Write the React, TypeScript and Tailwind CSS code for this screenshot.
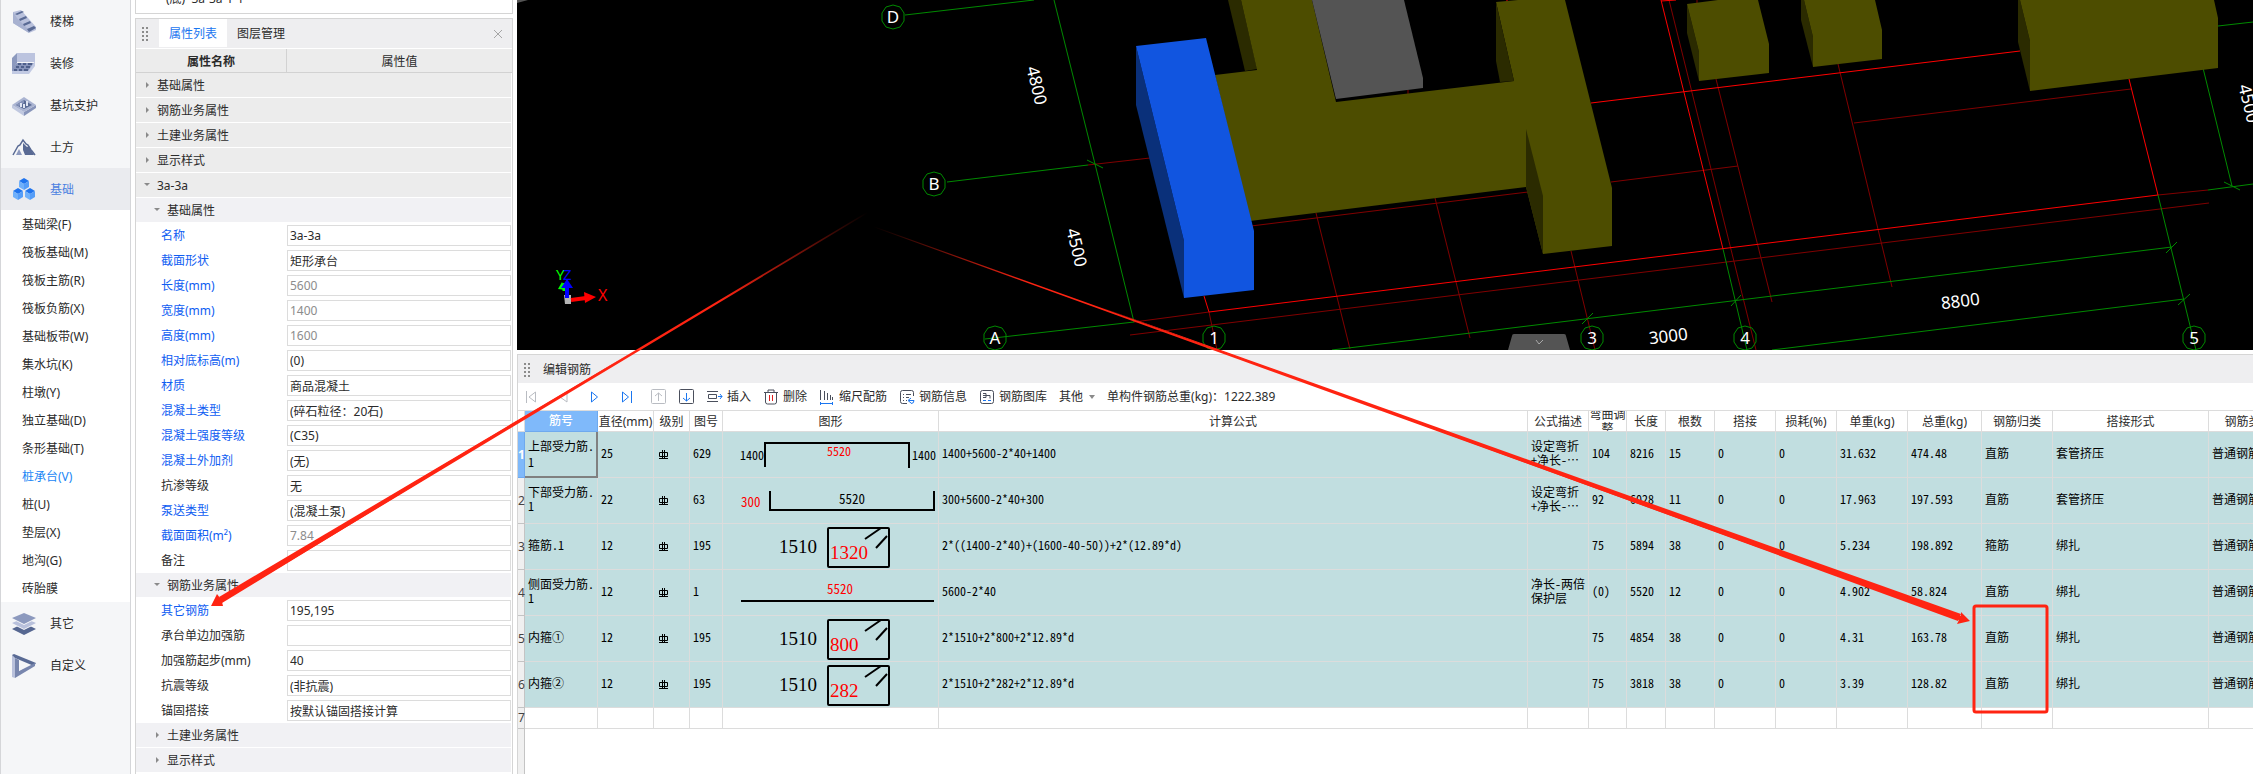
import React, { useState } from "react";
import { clsx } from "clsx";

const RED = "#ff2412";

/* ---------- left module menu ---------- */

const StairsIcon = () => (
  <svg width="24" height="24" viewBox="0 0 24 24">
    <path d="M1 2 9 0 24 17v3l-7 3L1 13z" fill="#b9c1dc" />
    <path d="M1 2v11l16 10v-3L5 8z" fill="#a7b1d0" />
    <path
      d="M3 4 10 1l2 1-7 3zM7 9l7-3 1 2-7 3zM11 14l7-3 1 2-7 3zM15 19l7-3 2 2-7 4z"
      fill="#596a94"
    />
  </svg>
);

const FinishIcon = () => (
  <svg width="24" height="24" viewBox="0 0 24 24">
    <path d="M5 1h18v9H5z" fill="#bcc4df" />
    <path d="M0 6 5 1v10l-5 7z" fill="#8c99be" />
    <path d="M5 11h18l-6 10H0v-4z" fill="#8794ba" />
    <path d="M0 19h16l7-10v5l-6 8H0z" fill="#c2cae3" />
    <path
      d="M6 12h3M11 12h3M16 12h4M4 15h3M9 15h3M14 15h4M2 18h3M7 18h3M12 18h4"
      stroke="#4f608b"
      strokeWidth="2"
    />
  </svg>
);

const PitIcon = () => (
  <svg width="24" height="24" viewBox="0 0 24 24">
    <path d="M0 11v3l12 8v-4z" fill="#c0c8e0" />
    <path d="M24 11v3l-12 8v-4z" fill="#8794ba" />
    <path d="m12 3 12 8-12 7L0 11z" fill="#a9b3d1" />
    <path d="m12 6 8 5-8 4-8-4z" fill="#596a94" />
    <path d="M12 6 4 11l3 1 5-3z" fill="#8794ba" />
    <path d="M8 9h2v4H8zM11 10h2v4h-2zM14 7h2v5h-2z" fill="#dfe4f2" />
  </svg>
);

const EarthIcon = () => (
  <svg width="24" height="24" viewBox="0 0 24 24">
    <path d="m4 19 3-6 3 6z" fill="#8c99be" />
    <path d="M11 7v7l2 5h9l-5-9-2 1z" fill="#596a94" />
    <path
      d="m1 19 5-9 2-1 3-5 3 4 2 1 3 5 1 1 3 4"
      fill="none"
      stroke="#596a94"
      strokeWidth="1.5"
    />
  </svg>
);

const Cube = ({ x, y }: { x: number; y: number }) => (
  <g transform={`translate(${x} ${y})`}>
    <path d="m6 0 5 3-5 3-5-3z" fill="#1f74ee" />
    <path d="M1 3v6l5 3V6z" fill="#6fb0fb" />
    <path d="M11 3v6l-5 3V6z" fill="#559df8" />
  </g>
);

const FoundationIcon = () => (
  <svg width="24" height="24" viewBox="0 0 24 24">
    <Cube x={6} y={0} />
    <Cube x={0} y={10} />
    <Cube x={12} y={10} />
  </svg>
);

const LayersIcon = () => (
  <svg width="24" height="24" viewBox="0 0 24 24">
    <path d="m12 11 12 6-12 6-12-6z" fill="#566791" />
    <path d="m12 6 12 6-12 6-12-6z" fill="#f5f6f8" />
    <path d="m12 6 12 5-12 6-12-6z" fill="#b9c1dc" />
    <path d="M0 7h24l-12 6z" fill="#f5f6f8" />
    <path d="m12 1 12 5-12 6L0 6z" fill="#8c99be" />
  </svg>
);

const CustomIcon = () => (
  <svg width="24" height="24" viewBox="0 0 24 24">
    <path d="M0 1v22l3 1V4z" fill="#b9c1dc" />
    <path d="M0 1 2 0l22 9-2 3L3 4z" fill="#596a94" />
    <path d="m3 24 20-12v-3L7 17V6L3 4z" fill="#7886ae" />
    <path d="m7 8 9 3-9 6z" fill="#f5f6f8" />
  </svg>
);

const topModules = [
  { name: "楼梯", icon: <StairsIcon /> },
  { name: "装修", icon: <FinishIcon /> },
  { name: "基坑支护", icon: <PitIcon /> },
  { name: "土方", icon: <EarthIcon /> },
  { name: "基础", icon: <FoundationIcon /> },
];

const bottomModules = [
  { name: "其它", icon: <LayersIcon /> },
  { name: "自定义", icon: <CustomIcon /> },
];

const foundationItems = [
  "基础梁(F)",
  "筏板基础(M)",
  "筏板主筋(R)",
  "筏板负筋(X)",
  "基础板带(W)",
  "集水坑(K)",
  "柱墩(Y)",
  "独立基础(D)",
  "条形基础(T)",
  "桩承台(V)",
  "桩(U)",
  "垫层(X)",
  "地沟(G)",
  "砖胎膜",
];

const ModuleButton = ({ name, icon, active }: any) => (
  <button
    className={clsx(
      "flex h-[42px] w-full items-center gap-[14px] pl-[11px] pt-[2px] text-left",
      active && "bg-[#eaebef] text-[#4a7fe0]"
    )}
  >
    {icon}
    <span>{name}</span>
  </button>
);

const ModuleMenu = () => {
  const [selected, setSelected] = useState("桩承台(V)");

  return (
    <nav className="w-[131px] shrink-0 border-x border-[#d5d6d9] bg-[#f5f6f8]">
      {topModules.map((m) => (
        <ModuleButton key={m.name} {...m} active={m.name === "基础"} />
      ))}
      <div className="bg-white">
        {foundationItems.map((item) => (
          <button
            key={item}
            onClick={() => setSelected(item)}
            className={clsx(
              "block h-7 w-full pl-[21px] pt-[2px] text-left",
              item === selected && "text-[#1a86f5]"
            )}
          >
            {item}
          </button>
        ))}
      </div>
      {bottomModules.map((m) => (
        <ModuleButton key={m.name} {...m} />
      ))}
    </nav>
  );
};

/* ---------- property panel ---------- */

type Prop = { label: string; value: string; blue?: boolean; dim?: boolean };

const basicProps: Prop[] = [
  { label: "名称", value: "3a-3a", blue: true },
  { label: "截面形状", value: "矩形承台", blue: true },
  { label: "长度(mm)", value: "5600", blue: true, dim: true },
  { label: "宽度(mm)", value: "1400", blue: true, dim: true },
  { label: "高度(mm)", value: "1600", blue: true, dim: true },
  { label: "相对底标高(m)", value: "(0)", blue: true },
  { label: "材质", value: "商品混凝土", blue: true },
  { label: "混凝土类型", value: "(碎石粒径：20石)", blue: true },
  { label: "混凝土强度等级", value: "(C35)", blue: true },
  { label: "混凝土外加剂", value: "(无)", blue: true },
  { label: "抗渗等级", value: "无" },
  { label: "泵送类型", value: "(混凝土泵)", blue: true },
  { label: "截面面积(m²)", value: "7.84", blue: true, dim: true },
  { label: "备注", value: "" },
];

const rebarProps: Prop[] = [
  { label: "其它钢筋", value: "195,195", blue: true },
  { label: "承台单边加强筋", value: "" },
  { label: "加强筋起步(mm)", value: "40" },
  { label: "抗震等级", value: "(非抗震)" },
  { label: "锚固搭接", value: "按默认锚固搭接计算" },
];

const Grip = () => (
  <svg width="7" height="14" viewBox="0 0 7 14" fill="#8b8b8b">
    {[0, 4, 8, 12].map((y) => (
      <g key={y}>
        <rect x="0" y={y} width="2" height="2" />
        <rect x="4" y={y} width="2" height="2" />
      </g>
    ))}
  </svg>
);

const GroupRow = ({ name, open, nested }: any) => (
  <button
    className={clsx(
      "flex h-[25px] w-full items-center gap-[5px] border-b border-white pt-[2px] text-left",
      nested ? "bg-[#f1f1f4] pl-[18px]" : "bg-[#ececec] pl-2"
    )}
  >
    <svg width="8" height="8" viewBox="0 0 8 8" fill="#8a8a8a">
      {open ? <path d="M0 1h6L3 4z" /> : <path d="M2 0v6l3-3z" />}
    </svg>
    <span>{name}</span>
  </button>
);

const PropRow = ({ label, value, blue, dim }: Prop) => (
  <div className="flex h-[25px] items-center">
    <label
      htmlFor={label}
      className={clsx("w-[151px] shrink-0 pl-[25px]", blue && "text-[#0f5df2]")}
    >
      {label}
    </label>
    <input
      id={label}
      defaultValue={value}
      className={clsx(
        "h-[21px] min-w-0 flex-1 border border-[#dcdcdc] px-[2px]",
        dim && "text-[#8c8c8c]"
      )}
    />
  </div>
);

const PropertyPanel = () => (
  <aside className="flex w-[378px] shrink-0 flex-col gap-1">
    <div className="flex h-[14px] items-end overflow-hidden border-x border-b border-[#d5d5d5] pl-[30px]">
      <span className="mb-[6px] whitespace-pre leading-4">(底)  3a-3a-1-1</span>
    </div>
    <section className="flex-1 border-x border-t border-[#d5d5d5]">
      <header className="flex h-[30px] items-center border-b border-white bg-[#eeeef0] pl-[6px] pr-[9px]">
        <Grip />
        <div className="ml-[10px] flex h-full flex-1">
          <button className="h-7 bg-white px-[10px] pt-px text-[#1a76f0]">
            属性列表
          </button>
          <button className="h-7 px-[10px] pt-px">图层管理</button>
        </div>
        <button aria-label="关闭">
          <svg width="10" height="10" viewBox="0 0 10 10" stroke="#a5a5a5">
            <path d="m1 1 8 8M9 1 1 9" />
          </svg>
        </button>
      </header>
      <div className="flex h-6 border-b border-[#d2d2d2] bg-[#ececec] text-center">
        <div className="w-[151px] border-r border-[#d2d2d2] pt-[5px] font-bold">
          属性名称
        </div>
        <div className="flex-1 pt-[5px]">属性值</div>
      </div>
      <div className="pr-px">
        <GroupRow name="基础属性" />
        <GroupRow name="钢筋业务属性" />
        <GroupRow name="土建业务属性" />
        <GroupRow name="显示样式" />
        <GroupRow name="3a-3a" open />
        <GroupRow name="基础属性" open nested />
        {basicProps.map((p) => (
          <PropRow key={p.label} {...p} />
        ))}
        <GroupRow name="钢筋业务属性" open nested />
        {rebarProps.map((p) => (
          <PropRow key={p.label} {...p} />
        ))}
        <GroupRow name="土建业务属性" nested />
        <GroupRow name="显示样式" nested />
      </div>
    </section>
  </aside>
);

/* ---------- 3D view ---------- */

const AxisMark = ({ x, y, text }: { x: number; y: number; text: string }) => (
  <g>
    <polygon
      transform={`translate(${x} ${y})`}
      points="0,-12 7,-10 11,-4 11,4 7,10 0,12 -7,10 -11,4 -11,-4 -7,-10"
      fill="none"
      stroke="#008a00"
    />
    <text x={x} y={y + 6} fontSize="17" fill="#fff" textAnchor="middle">
      {text}
    </text>
  </g>
);

const ModelView = () => (
  <div className="relative h-[350px] bg-black">
    <svg
      className="block h-full w-full"
      viewBox="517 0 1736 350"
      preserveAspectRatio="xMinYMin slice"
    >
      <path d="M517 0h11l-11 3z" fill="#545454" />
      <path
        d="M1134 322 1209 312M1130 335 2209 203M1209 312 1217 350M1088 165 1150 158M1251 226 1528 192M1316 213 1350 349M1435 198 1470 338M1571 251 1595 350M1611 182 1738 166M1669 0 1756 350M1697 0v4M1716 79 1772 302M1838 64 1892 287M1854 123 2131 89M2158 195 2208 190M1408 90v4"
        fill="none"
        stroke="#800000"
      />
      <path
        d="M1204 296 1209 312 2158 195 2129 79M1591 103 2020 51M1661 0 1723 249M1661 1 1676 0M1507 0v3"
        fill="none"
        stroke="#f00"
      />
      <path
        d="M905 15 1034 0M1054 0 1095 164 1134 322M947 182 1088 165M985 339 1134 322M1087 160 1103 168M1332 350 2172 247M1582 324 1593 313M1723 249 1747 350M2158 195 2196 350M1772 350 2184 299M2166 253 2177 242M2178 305 2190 294M1731 306 1741 295M2203 68 2232 186M2224 182 2240 190M2218 26 2253 22M2208 190 2253 184"
        fill="none"
        stroke="#008a00"
      />

      {/* caps and beams */}
      <g fill="#2b2b00">
        <path d="M1228 0h13l16 69-12 2z" />
        <path d="M1687 4v29l12 48V52z" />
        <path d="M1801 0h3l9 37v30l-12-47z" />
        <path d="M2018 0h2l10 41v50l-12-49z" />
      </g>
      <g fill="#4d4d00">
        <path d="M1241 0h71l24 102 178-21-18-79 22-2h47l47 188v58l-69 8-17-67-276 34-35-146 42-5z" />
        <path d="m1687 4 31-4h40l11 44v29l-70 8V52z" />
        <path d="M1804 0h71l7 30v29l-69 8V37z" />
        <path d="M2020 0h194l4 18v50l-188 23V41z" />
      </g>
      <path d="M1496 2v59l4 21 14-1z" fill="#2b2b00" />
      <path d="M1526 129v58l17 67v-58z" fill="#2b2b00" />
      <path d="M1312 0h92l19 78v10l-87 11z" fill="#545454" />
      <path d="M1136 46v59l48 193v-57z" fill="#0a307a" />
      <path d="m1136 46 70-8 48 193v59l-70 8v-57z" fill="#1155e0" />

      <AxisMark x={893} y={17} text="D" />
      <AxisMark x={934} y={184} text="B" />
      <AxisMark x={995} y={338} text="A" />
      <AxisMark x={1214} y={338} text="1" />
      <AxisMark x={1592} y={338} text="3" />
      <AxisMark x={1745} y={338} text="4" />
      <AxisMark x={2194} y={338} text="5" />
      <g fill="#fff" fontSize="17" textAnchor="middle">
        <text transform="translate(1031 87) rotate(76)">4800</text>
        <text transform="translate(1071 249) rotate(76)">4500</text>
        <text transform="translate(2243 105) rotate(76)">4500</text>
        <text transform="translate(2213 -17) rotate(76)">4800</text>
        <text transform="translate(1669 342) rotate(-7)">3000</text>
        <text transform="translate(1961 307) rotate(-7)">8800</text>
      </g>

      {/* coordinate axes */}
      <path d="M564 291v-8" stroke="#0f0" strokeWidth="3" />
      <path d="m558 289 4-7 4 8z" fill="#0f0" />
      <path d="M564 295h7v9h-6z" fill="#b5b5b5" />
      <path d="M567 298v-12" stroke="#00f" strokeWidth="4" />
      <path d="m561 288 6-9 6 9z" fill="#00f" />
      <path d="m571 300 15-2" stroke="#f00" strokeWidth="4" />
      <path d="m584 292 12 5-11 6z" fill="#f00" />
      <text x="556" y="280" fontSize="15" fill="#0f0">Y</text>
      <text x="563" y="280" fontSize="15" fill="#00f">Z</text>
      <text x="598" y="301" fontSize="16" fill="#f00">X</text>
    </svg>
    <button
      aria-label="收起"
      className="absolute bottom-0 left-[991px] h-4 w-[62px]"
    >
      <svg width="62" height="16" viewBox="0 0 62 16">
        <path d="M0 16 4 2q0-2 2-2h50q2 0 2 2l4 14z" fill="#545454" />
        <path d="m28 6 3 4 4-4" fill="none" stroke="#a8a8a8" />
      </svg>
    </button>
  </div>
);

/* ---------- rebar editor ---------- */

const Stirrup = ({ height }: { height: string }) => (
  <svg width="215" height="45" className="block">
    <g fill="none" stroke="#000" strokeWidth="2">
      <rect x="105" y="4" width="61" height="39" rx="1" />
      <path d="m142 15 16-11M153 24l11-12" />
    </g>
    <g className="font-['Liberation_Serif',serif]" fontSize="19">
      <text x="56" y="29">1510</text>
      <text x="107" y="35" fill="#f00">{height}</text>
    </g>
  </svg>
);

const TopBar = () => (
  <svg width="215" height="45" className="block" fontSize="12">
    <path d="M42 35V11h144v25" fill="none" stroke="#000" strokeWidth="2" />
    <text x="17" y="28">1400</text>
    <text x="104" y="24" fill="#f00">5520</text>
    <text x="189" y="28">1400</text>
  </svg>
);

const BottomBar = () => (
  <svg width="215" height="45" className="block" fontSize="13">
    <path d="M47 13v19h164V13" fill="none" stroke="#000" strokeWidth="2" />
    <text x="18" y="29" fill="#f00">300</text>
    <text x="116" y="26">5520</text>
  </svg>
);

const SideBar = () => (
  <svg width="215" height="45" className="block" fontSize="13">
    <path d="M18 31h193" stroke="#000" strokeWidth="2" />
    <text x="104" y="24" fill="#f00">5520</text>
  </svg>
);

const GradeMark = () => (
  <svg width="9" height="10" viewBox="0 0 9 10" fill="none" stroke="#000">
    <path d="M.5 2.500h8v4h-8zM3.500 0v9M5.500 0v9M0 8.500h9" />
  </svg>
);

const columns = [
  { name: "直径(mm)", width: "w-[56px]" },
  { name: "级别", width: "w-[36px]" },
  { name: "图号", width: "w-[33px]" },
  { name: "图形", width: "w-[216px]" },
  { name: "计算公式", width: "" },
  { name: "公式描述", width: "w-[61px]" },
  { name: "弯曲调整", width: "w-[38px]" },
  { name: "长度", width: "w-[39px]" },
  { name: "根数", width: "w-[49px]" },
  { name: "搭接", width: "w-[61px]" },
  { name: "损耗(%)", width: "w-[61px]" },
  { name: "单重(kg)", width: "w-[71px]" },
  { name: "总重(kg)", width: "w-[74px]" },
  { name: "钢筋归类", width: "w-[71px]" },
  { name: "搭接形式", width: "w-[156px]" },
  { name: "钢筋类型", width: "w-[80px]" },
];

const rows = [
  ["上部受力筋.\n1", "25", "629", <TopBar />, "1400+5600-2*40+1400", "设定弯折\n+净长-⋯", "104", "8216", "15", "31.632", "474.48", "直筋", "套管挤压"],
  ["下部受力筋.\n1", "22", "63", <BottomBar />, "300+5600-2*40+300", "设定弯折\n+净长-⋯", "92", "6028", "11", "17.963", "197.593", "直筋", "套管挤压"],
  ["箍筋.1", "12", "195", <Stirrup height="1320" />, "2*((1400-2*40)+(1600-40-50))+2*(12.89*d)", "", "75", "5894", "38", "5.234", "198.892", "箍筋", "绑扎"],
  ["侧面受力筋.\n1", "12", "1", <SideBar />, "5600-2*40", "净长-两倍\n保护层", "(0)", "5520", "12", "4.902", "58.824", "直筋", "绑扎"],
  ["内箍①", "12", "195", <Stirrup height="800" />, "2*1510+2*800+2*12.89*d", "", "75", "4854", "38", "4.31", "163.78", "直筋", "绑扎"],
  ["内箍②", "12", "195", <Stirrup height="282" />, "2*1510+2*282+2*12.89*d", "", "75", "3818", "38", "3.39", "128.82", "直筋", "绑扎"],
];

const Cell = ({ children }: { children?: React.ReactNode }) => (
  <td className="overflow-hidden whitespace-pre border-b border-r border-[#dcdcdc] pb-1 pl-[3px] leading-[14px]">
    {children}
  </td>
);

const RebarTable = () => (
  <table className="w-[calc(100%+36px)] table-fixed border-separate border-spacing-0">
    <thead>
      <tr className="h-[21px] text-center">
        <th className="w-[7px] border-b border-r border-[#dcdcdc]" />
        <th className="w-[73px] border border-l-0 border-t-0 border-[#6ea9ee] bg-[#7fb9fa] p-0 font-medium text-white">
          筋号
        </th>
        {columns.map((c) => (
          <th
            key={c.name}
            className={clsx(
              "border-b border-r border-[#dcdcdc] p-0 font-normal",
              c.width
            )}
          >
            <div className="-mx-1 flex h-5 items-center justify-center overflow-hidden px-1 pt-px leading-[14px]">
              {c.name}
            </div>
          </th>
        ))}
      </tr>
    </thead>
    <tbody className="font-['Noto_Sans_CJK_SC',sans-serif] text-black [font-feature-settings:'hwid']">
      {rows.map((r, i) => (
        <tr key={i} className="h-[46px] bg-[#c1dee0]">
          <th
            className={clsx(
              "border-b border-r p-0 font-['Noto_Sans',sans-serif]",
              i === 0
                ? "border-[#6ea9ee] bg-[#7fb9fa] font-bold text-white"
                : "border-[#c4c4c4] bg-[#f0f0f0] font-normal text-[#444]"
            )}
          >
            {i + 1}
          </th>
          <td
            className={clsx(
              "overflow-hidden whitespace-pre pl-[3px]",
              i === 0
                ? "border-b-2 border-r-2 border-[#808080] leading-4"
                : "border-b border-r border-[#dcdcdc] pb-1 leading-[14px]"
            )}
          >
            {r[0]}
          </td>
          <Cell>{r[1]}</Cell>
          <td className="border-b border-r border-[#dcdcdc] pl-[5px]">
            <GradeMark />
          </td>
          <Cell>{r[2]}</Cell>
          <td className="border-b border-r border-[#dcdcdc] p-0">{r[3]}</td>
          <Cell>{r[4]}</Cell>
          <Cell>{r[5]}</Cell>
          <Cell>{r[6]}</Cell>
          <Cell>{r[7]}</Cell>
          <Cell>{r[8]}</Cell>
          <Cell>0</Cell>
          <Cell>0</Cell>
          <Cell>{r[9]}</Cell>
          <Cell>{r[10]}</Cell>
          <Cell>{r[11]}</Cell>
          <Cell>{r[12]}</Cell>
          <Cell>普通钢筋</Cell>
        </tr>
      ))}
      <tr className="h-[21px]">
        <th className="border-b border-r border-[#c4c4c4] bg-[#f0f0f0] p-0 font-['Noto_Sans',sans-serif] font-normal text-[#444]">
          7
        </th>
        <Cell />
        {columns.map((c) => (
          <Cell key={c.name} />
        ))}
      </tr>
    </tbody>
  </table>
);

const ToolIcon = ({ children, ...rest }: any) => (
  <svg
    width="16"
    height="16"
    viewBox="0 0 16 16"
    fill="none"
    stroke="#4a4f5c"
    className="shrink-0"
    {...rest}
  >
    {children}
  </svg>
);

const Toolbar = () => (
  <div className="flex h-7 items-center gap-3 whitespace-nowrap border-b border-[#dcdcdc] pl-[5px] pt-px">
    <div className="flex gap-4">
      <button aria-label="首行">
        <ToolIcon stroke="#b9bcc2">
          <path d="M3.500 2v12M12.500 3v10L6 8z" />
        </ToolIcon>
      </button>
      <button aria-label="上一行">
        <ToolIcon stroke="#b9bcc2">
          <path d="M12 3v10L5 8z" />
        </ToolIcon>
      </button>
      <button aria-label="下一行">
        <ToolIcon stroke="#1a76f0">
          <path d="M4.500 3v10l6-5z" />
        </ToolIcon>
      </button>
      <button aria-label="末行">
        <ToolIcon stroke="#1a76f0">
          <path d="M3.500 3v10l6-5zM12.500 2v12" />
        </ToolIcon>
      </button>
      <button aria-label="上移">
        <ToolIcon stroke="#b9bcc2">
          <rect x=".5" y=".5" width="14" height="14" rx="1" />
          <path d="M7.500 12V4M4 7l3.500-3L11 7" />
        </ToolIcon>
      </button>
    </div>
    <button aria-label="下移">
      <ToolIcon>
        <rect x=".5" y=".5" width="14" height="14" rx="1" />
        <path d="M7.500 4v8M4 9l3.500 3L11 9" stroke="#1a76f0" />
      </ToolIcon>
    </button>
    <button className="flex items-center gap-1">
      <ToolIcon>
        <path d="M0 2.500h11M0 12.500h11M1.500 5.500h8v4h-8z" />
        <path d="M11 7.500h4M13 5l2 2.500L13 10" stroke="#1a76f0" />
      </ToolIcon>
      插入
    </button>
    <button className="flex items-center gap-1">
      <ToolIcon>
        <path d="M1 3.500h14M5 3V1h6v2M2.500 4v9q0 2 2 2h7q2 0 2-2V4" />
        <path d="M6.500 6v6M9.500 6v6" stroke="#e02020" />
      </ToolIcon>
      删除
    </button>
    <button className="flex items-center gap-1">
      <ToolIcon>
        <path d="M1.500 1v10M5.500 2v9M8.500 4v7M11.500 6v5M13.500 8v3" />
        <path d="M1 14.500h13M1.500 13v3M13.500 13v3" stroke="#1a76f0" />
      </ToolIcon>
      缩尺配筋
    </button>
    <button className="flex items-center gap-1">
      <ToolIcon>
        <path d="M8 14.500H3.500q-2 0-2-2v-9q0-2 2-2h9q2 0 2 2V7M4 5.500h1M7 5.500h5M4 8.500h1M7 8.500h3M4 11.500h1M7 11.500h1" />
        <path d="M10 11.500h5q0 3-3 3M12 9l-3 2.500L12 14" stroke="#1a76f0" />
      </ToolIcon>
      钢筋信息
    </button>
    <button className="flex items-center gap-1">
      <ToolIcon>
        <rect x="1.500" y="1.500" width="13" height="13" rx="2" />
        <path d="M4 4.500h3v4H4M4 6.500h3M7 6.500h4v3" />
        <path d="M4 11.500h3M9 11.500h3" stroke="#1a76f0" />
      </ToolIcon>
      钢筋图库
    </button>
    <button className="flex items-center gap-[6px]">
      其他
      <svg width="6" height="4" viewBox="0 0 6 4" fill="#8a8a8a">
        <path d="M0 0h6L3 4z" />
      </svg>
    </button>
    <span>单构件钢筋总重(kg)：1222.389</span>
  </div>
);

const RebarEditor = () => (
  <section className="mt-1 flex flex-1 flex-col overflow-hidden border-l border-t border-[#d5d5d5]">
    <header className="flex h-7 items-center gap-3 bg-[#eeeef0] pl-[6px] pt-px">
      <Grip />
      <h2>编辑钢筋</h2>
    </header>
    <Toolbar />
    <RebarTable />
    <div className="w-[7px] flex-1 border-r border-[#c4c4c4] bg-[#f0f0f0]" />
  </section>
);

/* Red callout drawn over the whole window */
const Annotation = () => (
  <svg className="pointer-events-none absolute inset-0 h-full w-full">
    <defs>
      <linearGradient id="fadeLeft" gradientUnits="userSpaceOnUse" x1="868" y1="213" x2="720" y2="301">
        <stop offset="0" stopColor={RED} stopOpacity="0" />
        <stop offset="1" stopColor={RED} />
      </linearGradient>
      <linearGradient id="fadeRight" gradientUnits="userSpaceOnUse" x1="873" y1="227" x2="1030" y2="284">
        <stop offset="0" stopColor={RED} stopOpacity="0" />
        <stop offset="1" stopColor={RED} />
      </linearGradient>
    </defs>
    <path
      d="M867 212 220 598 217 594 211 606H223L222 602 868 213z"
      fill="url(#fadeLeft)"
    />
    <path
      d="M873 226 1961 616V612L1970 621 1957 624 1959 620 873 227z"
      fill="url(#fadeRight)"
    />
    {/* widening part of the two shafts */}
    <path d="M636 350 219 597 222 603z" fill={RED} />
    <path d="M1100 307 1961 614 1958 621z" fill={RED} />
    <rect x="1974" y="606" width="73" height="106" rx="2" fill="none" stroke={RED} strokeWidth="3" />
  </svg>
);

const App = () => {
  return (
    <div className="relative flex min-h-screen gap-1 overflow-hidden bg-white font-['Noto_Sans','Noto_Sans_CJK_SC',sans-serif] text-[12px] leading-4 text-[#2b2b2b]">
      <ModuleMenu />
      <PropertyPanel />
      <main className="flex min-w-0 flex-1 flex-col">
        <ModelView />
        <RebarEditor />
      </main>
      <Annotation />
    </div>
  );
};

export default App;
